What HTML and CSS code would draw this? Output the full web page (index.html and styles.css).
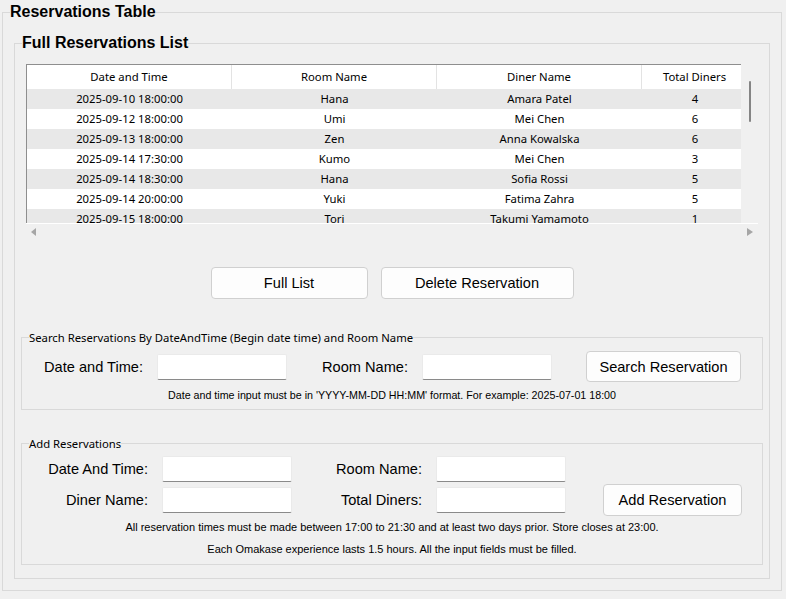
FILE: index.html
```html
<!DOCTYPE html>
<html>
<head>
<meta charset="utf-8">
<title>Reservations Table</title>
<link rel="stylesheet" href="styles.css">
</head>
<body>
<fieldset class="frame outer">
  <legend class="title">Reservations Table</legend>
  <fieldset class="frame list">
    <legend class="title">Full Reservations List</legend>
    <div class="scrollpane">
      <div class="viewport-row">
        <div class="viewport">
          <div class="grid">
            <div class="th">Date and Time</div><div class="th">Room Name</div><div class="th">Diner Name</div><div class="th">Total Diners</div>
            <div class="td odd">2025-09-10 18:00:00</div><div class="td odd">Hana</div><div class="td odd">Amara Patel</div><div class="td odd">4</div>
            <div class="td">2025-09-12 18:00:00</div><div class="td">Umi</div><div class="td">Mei Chen</div><div class="td">6</div>
            <div class="td odd">2025-09-13 18:00:00</div><div class="td odd">Zen</div><div class="td odd">Anna Kowalska</div><div class="td odd">6</div>
            <div class="td">2025-09-14 17:30:00</div><div class="td">Kumo</div><div class="td">Mei Chen</div><div class="td">3</div>
            <div class="td odd">2025-09-14 18:30:00</div><div class="td odd">Hana</div><div class="td odd">Sofia Rossi</div><div class="td odd">5</div>
            <div class="td">2025-09-14 20:00:00</div><div class="td">Yuki</div><div class="td">Fatima Zahra</div><div class="td">5</div>
            <div class="td odd">2025-09-15 18:00:00</div><div class="td odd">Tori</div><div class="td odd">Takumi Yamamoto</div><div class="td odd">1</div>
          </div>
        </div>
        <div class="vscroll"><div class="vthumb"></div></div>
      </div>
      <div class="hscroll"><span class="arrow arrow-left"></span><span class="arrow arrow-right"></span></div>
    </div>
    <div class="actions">
      <button class="btn btn-full">Full List</button>
      <button class="btn btn-delete">Delete Reservation</button>
    </div>
    <fieldset class="group search">
      <legend class="group-title">Search Reservations By DateAndTime (Begin date time) and Room Name</legend>
      <div class="search-row">
        <label class="lbl">Date and Time:</label>
        <input class="field" type="text">
        <label class="lbl">Room Name:</label>
        <input class="field" type="text">
        <button class="btn btn-search">Search Reservation</button>
      </div>
      <p class="note note-search">Date and time input must be in 'YYYY-MM-DD HH:MM' format. For example: 2025-07-01 18:00</p>
    </fieldset>
    <fieldset class="group add">
      <legend class="group-title">Add Reservations</legend>
      <div class="add-grid">
        <label class="lbl">Date And Time:</label>
        <input class="field" type="text">
        <label class="lbl">Room Name:</label>
        <input class="field" type="text">
        <label class="lbl row-start">Diner Name:</label>
        <input class="field" type="text">
        <label class="lbl">Total Diners:</label>
        <input class="field" type="text">
        <button class="btn btn-add">Add Reservation</button>
      </div>
      <p class="note note-first">All reservation times must be made between 17:00 to 21:30 and at least two days prior. Store closes at 23:00.</p>
      <p class="note note-second">Each Omakase experience lasts 1.5 hours. All the input fields must be filled.</p>
    </fieldset>
  </fieldset>
</fieldset>
</body>
</html>
```

FILE: styles.css
```css
html, body {
  margin: 0;
  padding: 0;
  background: #f0f0f0;
}
body {
  font-family: "Liberation Sans", Arial, sans-serif;
  color: #000;
  width: 786px;
  height: 599px;
  overflow: hidden;
}
fieldset {
  box-sizing: border-box;
  min-inline-size: 0;
  padding: 0;
  border: 1px solid #d9d9d9;
}
legend {
  padding: 0;
}
.title {
  font-family: "Liberation Sans", Arial, sans-serif;
  font-weight: bold;
  font-size: 16px;
  line-height: 19px;
  padding-bottom: 2px;
  margin-left: 7px;
}
.outer {
  margin: 2px 0 0 2px;
  width: 780px;
  height: 589px;
}
.list {
  margin: 10px 0 0 11px;
  width: 756px;
  height: 546px;
}
.scrollpane {
  margin: 10px 0 0 11px;
  width: 732px;
}
.viewport-row {
  display: flex;
  height: 159px;
}
.viewport {
  width: 714px;
  height: 158px;
  border-left: 1px solid #8e8e8e;
  border-top: 1px solid #8e8e8e;
  overflow: hidden;
}
.grid {
  display: grid;
  grid-template-columns: 205px 205px 205px 106px;
  grid-template-rows: 24px;
  grid-auto-rows: 20px;
  width: 721px;
  font-family: "Noto Sans", "Liberation Sans", sans-serif;
  font-size: 11.3px;
}
.th {
  height: 24px;
  line-height: 24px;
  background: #fff;
  border-right: 1px solid #e3e3e3;
  box-sizing: border-box;
  text-align: center;
}
.td {
  height: 20px;
  line-height: 20px;
  text-align: center;
  background: #fff;
}
.td.odd {
  background: #e8e8e8;
}
.vscroll {
  width: 17px;
  background: #f0f0f0;
  padding-top: 17px;
  box-sizing: border-box;
}
.vthumb {
  width: 2px;
  height: 41px;
  margin-left: 8px;
  background: #858585;
  border-radius: 1px;
}
.hscroll {
  height: 16px;
  border-top: 1px solid #fff;
  display: flex;
  align-items: center;
  justify-content: space-between;
  padding: 0 5px;
}
.arrow {
  width: 0;
  height: 0;
  border-top: 4px solid transparent;
  border-bottom: 4px solid transparent;
}
.arrow-left {
  border-right: 5px solid #a6a6a6;
}
.arrow-right {
  border-left: 6px solid #a6a6a6;
}
.actions {
  margin-top: 27px;
  display: flex;
  justify-content: center;
  gap: 13px;
}
.btn {
  font-family: "Liberation Sans", Arial, sans-serif;
  font-size: 14.6px;
  color: #000;
  background: #fdfdfd;
  border: 1px solid #d0d0d0;
  border-radius: 4px;
  height: 32px;
  padding: 0;
  box-sizing: border-box;
}
.btn-full { width: 157px; }
.btn-delete { width: 193px; }
.group {
  width: 742px;
  margin-left: 6px;
}
.group-title {
  font-family: "Noto Sans", "Liberation Sans", sans-serif;
  font-size: 11.3px;
  line-height: 15px;
  margin-left: 7px;
}
.search {
  margin-top: 31px;
  padding: 6px 0 7px 0;
}
.search-row {
  display: grid;
  grid-template-columns: 135px 130px 135px 130px auto;
  height: 31px;
  align-items: center;
}
.lbl {
  font-size: 14.6px;
  text-align: right;
  padding-right: 14px;
  white-space: nowrap;
}
.row-start {
  grid-column: 1;
}
.field {
  width: 130px;
  height: 26px;
  box-sizing: border-box;
  margin: 0;
  background: #fff;
  border: 1px solid #eaeaea;
  border-bottom: 1px solid #8a8a8a;
  border-radius: 2px;
}
.btn-search {
  margin-left: 34px;
  width: 155px;
  height: 31px;
}
.note {
  margin: 0;
  font-size: 11px;
  line-height: 14px;
  text-align: center;
}
.note-search {
  margin-top: 6px;
  font-size: 10.7px;
}
.add {
  margin-top: 26px;
  padding: 5px 0 8px 0;
}
.add-grid {
  display: grid;
  grid-template-columns: 140px 130px 144px 130px auto;
  grid-template-rows: 26px 33px;
  row-gap: 1px;
  align-items: center;
}
.btn-add {
  grid-column: 5;
  grid-row: 2;
  margin-left: 37px;
  width: 139px;
  height: 32px;
}
.add .note-first {
  margin-top: 4px;
}
.add .note-second {
  margin-top: 8px;
}
```
